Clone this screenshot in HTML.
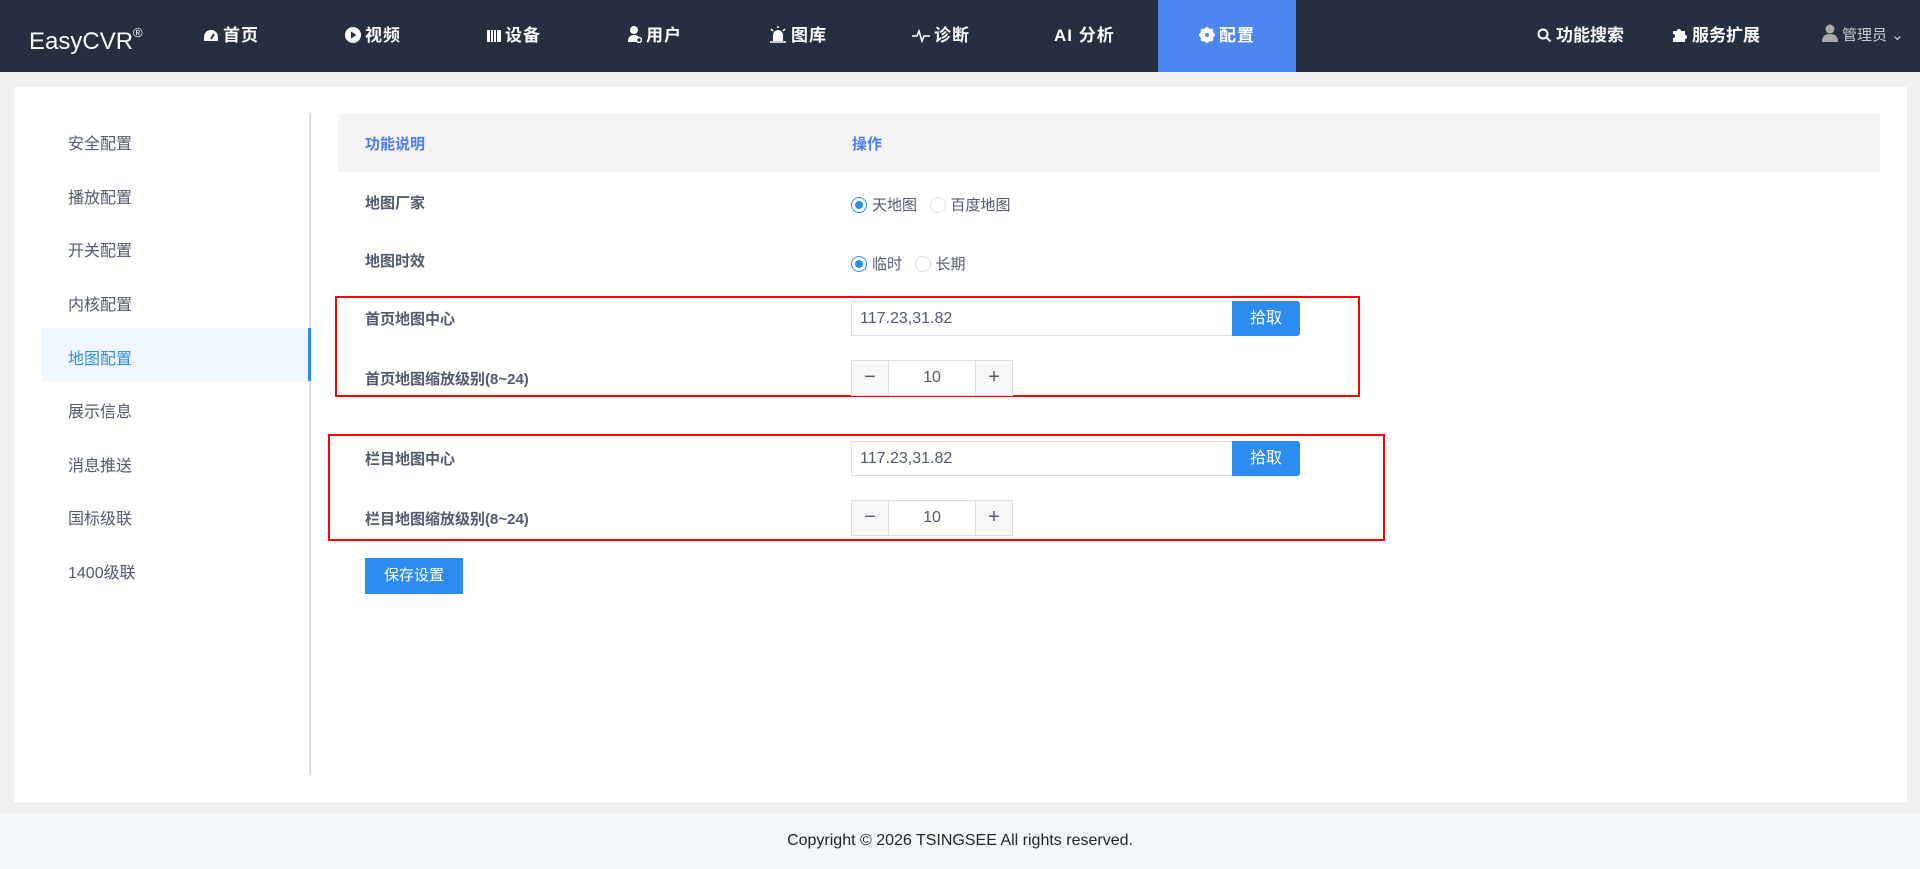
<!DOCTYPE html>
<html><head><meta charset="utf-8"><style>
*{margin:0;padding:0;box-sizing:border-box}
body{width:1920px;height:869px;background:#f0f0f0;font-family:"Liberation Sans","Noto Sans CJK SC",sans-serif;position:relative;overflow:hidden;color:#515a6e}
.nav{position:absolute;left:0;top:0;width:1920px;height:72px;background:#252f40;color:#fff}
.nav .it{position:absolute;top:0;height:72px;line-height:72px;font-size:17px;font-weight:bold;letter-spacing:1px;white-space:nowrap}
.nav svg{vertical-align:-2px;margin-right:4px}
.logo{position:absolute;left:29px;top:0;line-height:72px;font-size:24px;color:#fff}
.logo sup{font-size:13px;position:relative;top:-3px}
.act{background:#4e86ef}
.panel{position:absolute;left:14px;top:87px;width:1893px;height:715px;background:#fff}
.side{position:absolute;font-size:16px;color:#515a6e}
.foot{position:absolute;left:0;top:813px;width:1920px;height:56px;background:#f5f8fb;text-align:center;line-height:56px;font-size:16px;color:#222}
.abs{position:absolute}
.lbl{position:absolute;left:365px;font-size:15px;font-weight:bold;color:#515a6e}
.rad{display:inline-block;width:16px;height:16px;border-radius:50%;border:1px solid #dcdee2;vertical-align:-3px;margin-right:5px;position:relative}
.rad.on{border-color:#2d8cf0}
.rad.on:after{content:"";position:absolute;left:3px;top:3px;width:8px;height:8px;border-radius:50%;background:#2d8cf0}
.inp{position:absolute;left:851px;width:382px;height:35px;border:1px solid #dcdee2;font-size:16px;line-height:33px;padding-left:8px;color:#515a6e}
.btn{position:absolute;left:1232px;width:68px;height:35px;background:#2d8cf0;color:#fff;font-size:16px;text-align:center;line-height:35px;border-radius:0 3px 3px 0}
.step{position:absolute;left:851px;width:162px;height:36px;border:1px solid #dcdee2;font-size:16px}
.step .m,.step .p{position:absolute;top:0;width:37px;height:34px;background:#f8f8f9;text-align:center;line-height:33px;font-size:20px;color:#515a6e}
.step .m{left:0;border-right:1px solid #dcdee2}
.step .p{right:0;border-left:1px solid #dcdee2}
.step .v{position:absolute;left:37px;right:37px;text-align:center;line-height:34px}
.red{position:absolute;border:2px solid #f00}
</style></head><body>
<div class="nav">
<div class="logo">EasyCVR<sup>®</sup></div>
<div class="it" style="left:203px"><svg width="16" height="14" viewBox="0 0 16 14"><path d="M8 1a7 7 0 0 0-7 7v4h14V8a7 7 0 0 0-7-7z" fill="#fff"/><path d="M8 10l3-5" stroke="#252f40" stroke-width="2"/></svg>首页</div>
<div class="it" style="left:345px"><svg width="16" height="16" viewBox="0 0 16 16"><circle cx="8" cy="8" r="8" fill="#fff"/><path d="M6 4.5v7l5.5-3.5z" fill="#252f40"/></svg>视频</div>
<div class="it" style="left:487px"><svg width="14" height="14" viewBox="0 0 14 14"><path d="M0 1h3v12H0zM4 1h2v12H4zM7 1h2v12H7zM10 1h4v12h-4z" fill="#fff"/></svg>设备</div>
<div class="it" style="left:628px"><svg width="14" height="17" viewBox="0 0 14 17"><circle cx="6" cy="4" r="4" fill="#fff"/><path d="M0 16c0-5 2-7 6-7s6 2 6 7z" fill="#fff"/><circle cx="11" cy="14" r="2.5" fill="#252f40" stroke="#fff" stroke-width="1.5"/></svg>用户</div>
<div class="it" style="left:769px"><svg width="18" height="17" viewBox="0 0 18 17"><path d="M4 15V9a5 5 0 0 1 10 0v6z" fill="#fff"/><path d="M1 16h16M9 0v2M2 3l2 2M16 3l-2 2" stroke="#fff" stroke-width="1.5"/></svg>图库</div>
<div class="it" style="left:912px"><svg width="18" height="14" viewBox="0 0 18 14"><path d="M0 7h5l2-5 3 10 2-5h6" stroke="#fff" stroke-width="1.6" fill="none"/></svg>诊断</div>
<div class="it" style="left:1054px">AI 分析</div>
<div class="it act" style="left:1158px;width:138px;text-align:center"><svg width="16" height="16" viewBox="0 0 16 16"><circle cx="8" cy="8" r="5.5" fill="none" stroke="#fff" stroke-width="3"/><path d="M8 0v16M0 8h16M2.3 2.3l11.4 11.4M13.7 2.3L2.3 13.7" stroke="#fff" stroke-width="2.6"/><circle cx="8" cy="8" r="2" fill="#4e86ef"/></svg>配置</div>
<div class="it" style="left:1537px;letter-spacing:0"><svg width="15" height="15" viewBox="0 0 15 15"><circle cx="6" cy="6" r="4.5" fill="none" stroke="#fff" stroke-width="2"/><path d="M9.5 9.5l4 4" stroke="#fff" stroke-width="2"/></svg>功能搜索</div>
<div class="it" style="left:1671px;letter-spacing:0"><svg width="17" height="17" viewBox="0 0 17 17"><path d="M2 5h4a2 2 0 1 1 4 0h4v4a2 2 0 1 1 0 4v3H2v-4a2 2 0 1 0 0-4z" fill="#fff"/></svg>服务扩展</div>
<div class="it" style="left:1822px;font-weight:normal;color:#ccc;letter-spacing:0;font-size:15px"><svg width="16" height="18" viewBox="0 0 16 18"><circle cx="8" cy="5" r="4.5" fill="#aaa"/><path d="M0 18c0-6 3-8 8-8s8 2 8 8z" fill="#aaa"/></svg>管理员 ⌄</div>
</div>
<div class="panel"></div>
<div class="abs" style="left:41px;top:328px;width:269px;height:53px;background:#f0f7ff"></div>
<div class="abs" style="left:309px;top:113px;width:2px;height:662px;background:#dcdee2"></div>
<div class="abs" style="left:308px;top:328px;width:3px;height:53px;background:#2d8cf0"></div>
<div class="side" style="left:68px;top:130px">安全配置</div>
<div class="side" style="left:68px;top:184px">播放配置</div>
<div class="side" style="left:68px;top:237px">开关配置</div>
<div class="side" style="left:68px;top:291px">内核配置</div>
<div class="side" style="left:68px;top:345px;color:#2d8cf0">地图配置</div>
<div class="side" style="left:68px;top:398px">展示信息</div>
<div class="side" style="left:68px;top:452px">消息推送</div>
<div class="side" style="left:68px;top:505px">国标级联</div>
<div class="side" style="left:68px;top:559px">1400级联</div>

<div class="abs" style="left:338px;top:114px;width:1542px;height:58px;background:#f4f4f4"></div>
<div class="abs" style="left:365px;top:133px;font-size:15px;color:#4a7ef0;font-weight:bold">功能说明</div>
<div class="abs" style="left:852px;top:133px;font-size:15px;color:#4a7ef0;font-weight:bold">操作</div>

<div class="lbl" style="top:192px">地图厂家</div>
<div class="abs" style="left:851px;top:194px;font-size:15px"><span class="rad on"></span>天地图 &nbsp;&nbsp;<span class="rad"></span>百度地图</div>
<div class="lbl" style="top:250px">地图时效</div>
<div class="abs" style="left:851px;top:253px;font-size:15px"><span class="rad on"></span>临时 &nbsp;&nbsp;<span class="rad"></span>长期</div>

<div class="red" style="left:335px;top:296px;width:1025px;height:101px"></div>
<div class="lbl" style="top:308px">首页地图中心</div>
<div class="inp" style="top:301px">117.23,31.82</div>
<div class="btn" style="top:301px">拾取</div>
<div class="lbl" style="top:368px">首页地图缩放级别(8~24)</div>
<div class="step" style="top:360px"><div class="m">−</div><div class="v">10</div><div class="p">+</div></div>

<div class="red" style="left:328px;top:434px;width:1057px;height:107px"></div>
<div class="lbl" style="top:448px">栏目地图中心</div>
<div class="inp" style="top:441px">117.23,31.82</div>
<div class="btn" style="top:441px">拾取</div>
<div class="lbl" style="top:508px">栏目地图缩放级别(8~24)</div>
<div class="step" style="top:500px"><div class="m">−</div><div class="v">10</div><div class="p">+</div></div>

<div class="abs" style="left:365px;top:558px;width:98px;height:36px;background:#2d8cf0;color:#fff;font-size:15px;text-align:center;line-height:36px">保存设置</div>

<div class="foot">Copyright © 2026 TSINGSEE All rights reserved.</div>
</body></html>
